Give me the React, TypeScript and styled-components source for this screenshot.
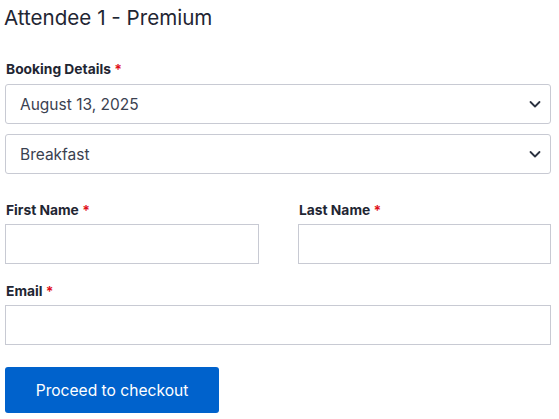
import React from 'react';
import styled, { createGlobalStyle } from 'styled-components';

const GlobalStyle = createGlobalStyle`
  body {
    margin: 0;
    background: #fff;
    font-family: Inter, "Noto Sans", sans-serif;
    color: #1f2633;
  }
  * {
    box-sizing: border-box;
  }
`;

type SelectProps = {
  value: string;
};

const Chevron = () => (
  <svg width="14" height="14" viewBox="0 0 14 14" fill="none">
    <path d="M2.5 5L7 9.5L11.5 5" stroke="#2b3240" strokeWidth="1.8" strokeLinecap="round" strokeLinejoin="round" />
  </svg>
);

const SelectBox = ({ value }: SelectProps) => (
  <Select>
    <SelectValue>{value}</SelectValue>
    <Chevron />
  </Select>
);

const Field = ({ label, children, top }: { label: string; children: React.ReactNode; top: number }) => (
  <FieldGroup top={top}>
    <Label>
      {label} <Required>*</Required>
    </Label>
    {children}
  </FieldGroup>
);

const App = () => {
  return (
    <>
      <GlobalStyle />
      <Page>
        <Title>Attendee 1 - Premium</Title>
        <Field label="Booking Details" top={23}>
          <SelectStack>
            <SelectBox value="August 13, 2025" />
            <SelectBox value="Breakfast" />
          </SelectStack>
        </Field>
        <Row>
          <Field label="First Name" top={26}>
            <Input type="text" />
          </Field>
          <Field label="Last Name" top={26}>
            <Input type="text" />
          </Field>
        </Row>
        <Field label="Email" top={17}>
          <Input type="email" />
        </Field>
        <Button type="button">Proceed to checkout</Button>
      </Page>
    </>
  );
};

export default App;

const Page = styled.div`
  width: 559px;
  padding: 0 8px 0 5px;
  display: flex;
  flex-direction: column;
`;

const Title = styled.h2`
  margin: 0 0 0 -1px;
  font-size: 20.6px;
  font-weight: 400;
  line-height: 36px;
  color: #1f2633;
`;

const FieldGroup = styled.div<{ top: number }>`
  display: flex;
  flex-direction: column;
  gap: 4px;
  margin-top: ${({ top }) => top}px;
`;

const Label = styled.label`
  font-size: 13.8px;
  font-weight: 700;
  line-height: 20px;
  padding-left: 1px;
  color: #1f2633;
`;

const Required = styled.span`
  color: #e0101a;
`;

const SelectStack = styled.div`
  display: flex;
  flex-direction: column;
  gap: 10px;
  margin-top: 1px;
`;

const Select = styled.div`
  height: 40px;
  display: flex;
  align-items: center;
  justify-content: space-between;
  padding: 0 8px 0 14px;
  border: 1px solid #c8cad3;
  border-radius: 3px;
  background: #fff;
`;

const SelectValue = styled.span`
  font-size: 15.5px;
  color: #3a4150;
`;

const Row = styled.div`
  display: grid;
  grid-template-columns: 254px 253px;
  column-gap: 39px;
`;

const Input = styled.input`
  width: 100%;
  height: 40px;
  border: 1px solid #c8cad3;
  border-radius: 0;
  padding: 0 12px;
  font-family: inherit;
  font-size: 16px;
  outline: none;
`;

const Button = styled.button`
  align-self: flex-start;
  margin-top: 22px;
  width: 214px;
  height: 46px;
  border: none;
  border-radius: 3px;
  background: #0062cc;
  color: #fff;
  font-family: inherit;
  font-size: 15.6px;
  font-weight: 400;
  cursor: pointer;
`;
